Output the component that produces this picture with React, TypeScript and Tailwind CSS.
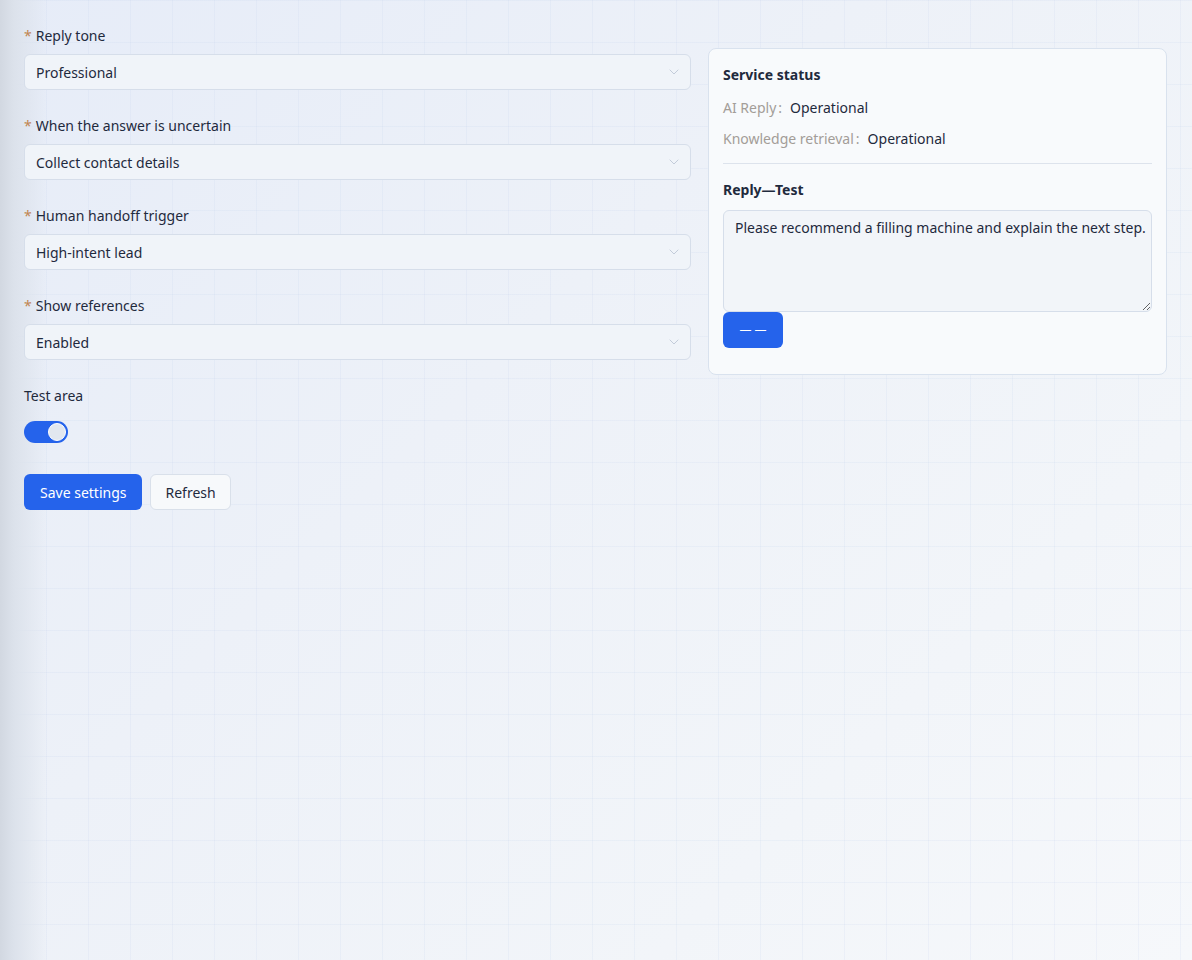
import { ChevronDown } from 'lucide-react'

const fields = [
  { label: 'Reply tone', value: 'Professional' },
  { label: 'When the answer is uncertain', value: 'Collect contact details' },
  { label: 'Human handoff trigger', value: 'High-intent lead' },
  { label: 'Show references', value: 'Enabled' },
]

const statuses = [
  { name: 'AI Reply', value: 'Operational' },
  { name: 'Knowledge retrieval', value: 'Operational' },
]

function SelectField({ label, value }: { label: string; value: string }) {
  return (
    <div className="mb-[24px]">
      <div className="flex items-center h-[22px] mb-[8px] text-[#1f2a3d]">
        <span className="text-[#c08552] mr-1">*</span>
        {label}
      </div>
      <div className="h-9 flex items-center justify-between pl-[11px] pr-[8px] rounded-md border border-[#d6deea] bg-[#f0f4f9]">
        <span className="text-[#1f2a3d]">{value}</span>
        <ChevronDown className="w-4 h-4 text-[#c3ccda]" strokeWidth={1.5} />
      </div>
    </div>
  )
}

export default function App() {
  return (
    <div className="min-h-screen w-full font-['Noto_Sans',sans-serif] text-[14px] bg-[linear-gradient(90deg,#d2d8e1_0px,#dce2eb_14px,rgba(232,238,248,0)_48px),linear-gradient(rgba(190,206,236,0.16)_1px,transparent_1px),linear-gradient(90deg,rgba(190,206,236,0.16)_1px,transparent_1px),linear-gradient(135deg,#e6ecf8_0%,#edf1f8_40%,#f2f5f9_75%,#f6f8fb_100%)] bg-size-[100%_100%,42px_42px,42px_42px,100%_100%] bg-position-[0_0,4px_0,4px_0,0_0]">
      <div className="flex gap-[17px] pl-6 pr-[25px] pt-[24px]">
        <div className="flex-1">
          {fields.map((f) => (
            <SelectField key={f.label} label={f.label} value={f.value} />
          ))}
          <div className="h-[22px] flex items-center text-[#1f2a3d]">Test area</div>
          <div className="mt-[15px] w-11 h-[22px] rounded-full bg-[#2563eb] flex items-center justify-end pr-[2px]">
            <div className="w-[18px] h-[18px] rounded-full bg-[#e2e7ef] border border-white" />
          </div>
          <div className="flex gap-2 mt-[31px]">
            <button className="h-9 px-4 rounded-md bg-[#2563eb] text-white">Save settings</button>
            <button className="h-9 px-[14px] rounded-md border border-[#d9e0ea] bg-[#f7f9fb] text-[#1f2a3d]">
              Refresh
            </button>
          </div>
        </div>

        <div className="w-[459px] mt-[24px] self-start rounded-lg border border-[#d9e2ee] bg-[#f8fafc] px-[14px] pt-[14px] pb-[26px]">
          <div className="font-bold text-[#1f2a3d] h-[22px] flex items-center">Service status</div>
          <div className="mt-[11px] flex flex-col gap-[9px]">
            {statuses.map((s) => (
              <div key={s.name} className="flex items-center h-[22px]">
                <span className="text-[#a39d98]">{s.name}</span>
                <span className="text-[#a39d98] ml-[2px] mr-[8px]">:</span>
                <span className="text-[#1f2a3d]">{s.value}</span>
              </div>
            ))}
          </div>
          <div className="mt-[14px] border-t border-[#dde3ec]" />
          <div className="mt-[14px] font-bold text-[#1f2a3d] h-[22px] flex items-center">Reply—Test</div>
          <textarea
            className="mt-[10px] block w-full h-[102px] rounded-md border border-[#d6deea] bg-[#f2f5f9] pl-[11px] pr-[2px] py-[6px] text-[#1f2a3d] outline-none"
            defaultValue="Please recommend a filling machine and explain the next step."
          />
          <button className="h-9 w-[60px] rounded-md bg-[#2563eb] text-white text-[12px]">— —</button>
        </div>
      </div>
    </div>
  )
}
